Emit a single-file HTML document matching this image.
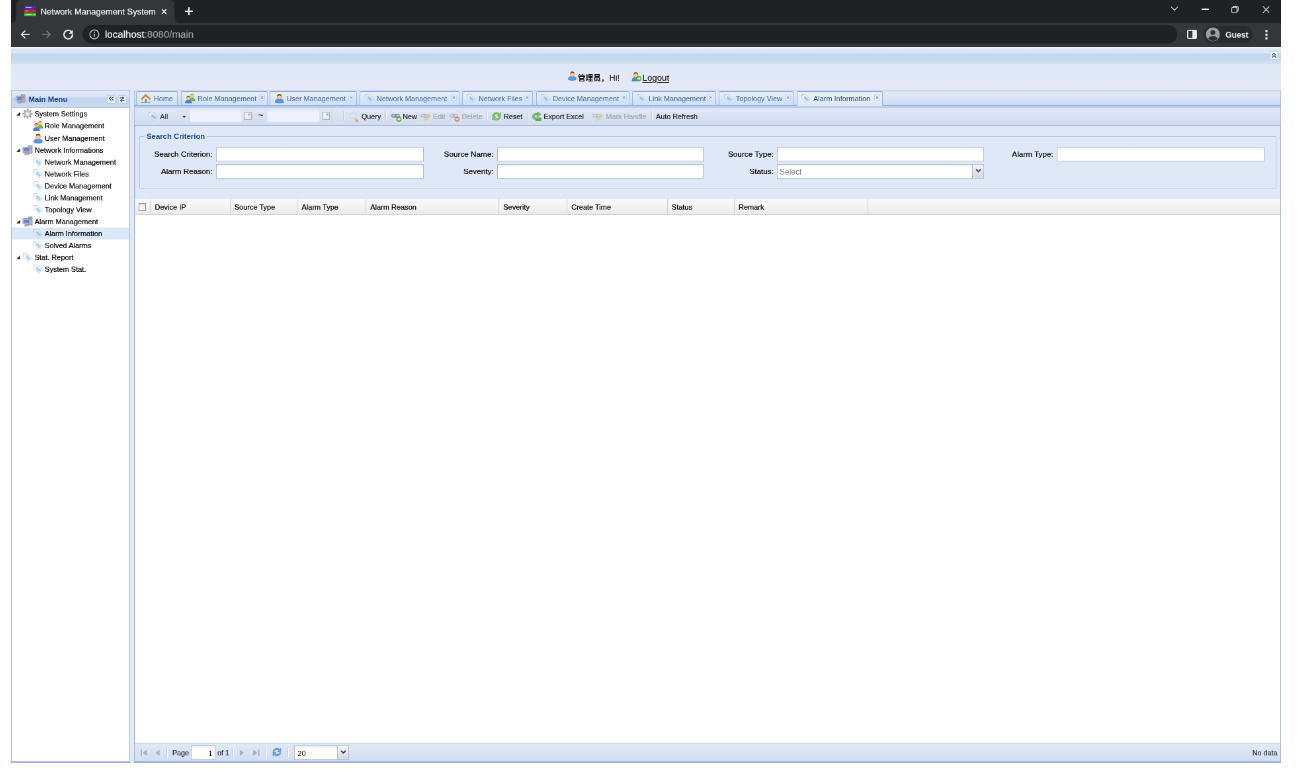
<!DOCTYPE html>
<html lang="en"><head><meta charset="utf-8"><title>Network Management System</title>
<style>
html,body{margin:0;padding:0;background:#fff;}
body{width:1299px;height:770px;overflow:hidden;position:relative;font-family:"Liberation Sans", "Noto Sans CJK SC", sans-serif;}
#root{position:absolute;left:11px;top:0;width:1920px;height:1153px;transform:scale(0.66146);transform-origin:0 0;overflow:hidden;background:#dfe8f6;font-size:11px;color:#000;will-change:transform;}
.a{position:absolute;white-space:nowrap;}
.t{position:absolute;white-space:nowrap;line-height:16px;height:16px;}
svg{position:absolute;overflow:visible;}
.hd{background:linear-gradient(#f3f7fc 0px,#dde8f6 2px,#d9e5f5 8px,#c3d6ef 10px,#c9daf0 18px,#d3e1f4 25px);border:1px solid #99bbe8;box-sizing:border-box;}
.tab{position:absolute;top:1.500px;height:21.500px;box-sizing:border-box;border:1px solid #9bb6e0;border-top-color:#86a8da;border-bottom:none;border-radius:3px 3px 0 0;background:linear-gradient(#e6f0fc,#d6e5f8 60%,#cfe0f6);}
.tab .t{top:2px;color:#48618e;font-size:10.9px;}
.tab.act{background:linear-gradient(#e9f0fb,#dde8f8);height:22px;border-color:#9db5dc;border-top-color:#7fa3d8;}
.tab.act .t{color:#34486e;}
.x{position:absolute;top:4px;right:3px;width:9px;height:9px;}
.inp{position:absolute;height:22px;box-sizing:border-box;border:1px solid #b5b8c8;background:#fff linear-gradient(#e9eef4 0,#fff 4px);}
.lbl{position:absolute;font-size:11.75px;line-height:16px;text-align:right;width:100px;white-space:nowrap;}
.sep{position:absolute;width:1px;height:14px;background:#b4c6e6;border-right:1px solid #fff;}
.tb{position:absolute;color:#23262f;font-size:10.8px;line-height:16px;white-space:nowrap;}
.tb.dis{color:#a1a7b2;}
.gh{position:absolute;top:0;height:23px;border-right:1px solid #d0d0d0;border-left:1px solid #eee;box-sizing:border-box;}
.gh span{position:absolute;left:5px;top:5.300px;font-size:11px;line-height:15px;white-space:nowrap;}
.row{position:absolute;left:0;width:178px;height:18px;}
.row .t{top:1px;font-size:11px;}
.row .t,.tb,.lbl,.gh span{-webkit-text-stroke:.22px currentColor;}
</style></head>
<body>

<svg width="0" height="0" style="position:absolute">
<defs>
<symbol id="tag" viewBox="0 0 16 16"><g opacity="0.58"><path d="M1.500 1.500H7L14.500 9 9 14.500 1.500 7Z" fill="#fff" stroke="#9aa4b2" stroke-width="1"/><path d="M5.500 4.600 7.300 4.500 12.600 9.500 9.500 12.600 4.500 7.500Z" fill="#6db6f0"/><circle cx="3.600" cy="3.600" r=".9" fill="#fff" stroke="#9aa4b2" stroke-width=".5"/></g></symbol>
<symbol id="user" viewBox="0 0 16 16"><path d="M1.500 14C1.500 10.300 4 9 8 9s6.500 1.300 6.500 5C12.500 15.800 3.500 15.800 1.500 14Z" fill="#5a98e6" stroke="#3468bd" stroke-width=".8"/><circle cx="8" cy="6" r="3.4" fill="#f5cfa0" stroke="#c98e55" stroke-width=".6"/><path d="M4.4 5.6C4.2 2.2 6 1 8 1s3.8 1.2 3.6 4.6C10.5 4 9.5 3.6 8 3.6S5.5 4 4.4 5.6Z" fill="#8b4a1c"/></symbol>
<symbol id="group" viewBox="0 0 16 16"><path d="M7 12C7 8.5 9 7.5 11.3 7.5S15.6 8.5 15.6 12Z" fill="#6cc04a" stroke="#3f8f2a" stroke-width=".7"/><circle cx="11.3" cy="4.3" r="2.8" fill="#f5cfa0" stroke="#c98e55" stroke-width=".6"/><path d="M8.4 4C8.3 1.4 9.7.6 11.3.6s3 .8 2.9 3.4C13.3 2.8 12.4 2.5 11.3 2.5S9.3 2.8 8.4 4Z" fill="#e29a2e"/><path d="M.6 15.6C.6 11.8 2.7 10.6 5.4 10.6s4.8 1.2 4.8 5Z" fill="#3d86e6" stroke="#245fb8" stroke-width=".7"/><circle cx="5.4" cy="7.8" r="2.8" fill="#f5cfa0" stroke="#c98e55" stroke-width=".6"/><path d="M2.5 7.5C2.4 4.8 3.8 4 5.4 4s3 .8 2.9 3.5C7.4 6.2 6.5 5.9 5.4 5.9S3.4 6.2 2.5 7.5Z" fill="#8b4a1c"/></symbol>
<symbol id="usergo" viewBox="0 0 16 16"><path d="M1 15.500C1 11 3.500 9.500 7 9.500S13 11 13 15.500Z" fill="#4d8fe0" stroke="#2c62b5" stroke-width=".8"/><circle cx="7" cy="6" r="3.400" fill="#f5cfa0" stroke="#c98e55" stroke-width=".6"/><path d="M3.400 5.600C3.200 2.200 5 1 7 1s3.800 1.200 3.600 4.600C9.500 4 8.500 3.600 7 3.600S4.500 4 3.400 5.600Z" fill="#8b4a1c"/><circle cx="11.800" cy="11.500" r="4" fill="#5fbf45" stroke="#3a8f28" stroke-width=".7"/><path d="M9.500 11.500h4M11.800 9.500l2 2-2 2" stroke="#fff" stroke-width="1.200" fill="none"/></symbol>
<symbol id="cog" viewBox="0 0 16 16"><g fill="none" stroke="#a2a2a2"><g stroke-width="2.600"><path d="M8 .4V3M8 13v2.600M.4 8H3M13 8h2.600M2.600 2.600l1.900 1.900M11.500 11.500l1.900 1.900M13.400 2.600l-1.900 1.900M4.500 11.500l-1.900 1.900"/></g></g><circle cx="8" cy="8" r="5.300" fill="#b4b4b4"/><circle cx="8" cy="8" r="3.600" fill="#dcdcdc"/><circle cx="8" cy="8" r="1.600" fill="#f4f4f4"/></symbol>
<symbol id="comp" viewBox="0 0 16 16"><rect x="9" y="1" width="6" height="12" fill="#b9bcc2" stroke="#7d8188" stroke-width=".8"/><rect x="10.3" y="3" width="3.4" height="1" fill="#7d8188"/><rect x="10.3" y="5.2" width="3.4" height="1" fill="#7d8188"/><rect x="1" y="3.5" width="10.5" height="8.2" rx="1" fill="#d5d7db" stroke="#7d8188" stroke-width=".8"/><rect x="2.3" y="4.8" width="7.9" height="5.4" fill="#6a7fd6"/><rect x="4.2" y="12" width="4" height="1.4" fill="#9a9ca2"/><rect x="2.8" y="13.4" width="7" height="1.6" rx=".6" fill="#c3c5ca" stroke="#8a8d94" stroke-width=".6"/></symbol>
<symbol id="house" viewBox="0 0 16 16"><rect x="1" y="13.5" width="14" height="1.6" fill="#5aa83c"/><path d="M3 8v6h10V8L8 3.5Z" fill="#f6ecd2" stroke="#b9975a" stroke-width=".6"/><path d="M.8 8.6 8 1.6l7.2 7-1.3 1.2L8 4.2 2.1 9.8Z" fill="#d08a3a" stroke="#9a5a1a" stroke-width=".6"/><rect x="6.6" y="9.2" width="2.8" height="4.8" fill="#8a6ab0"/></symbol>
<symbol id="zoom" viewBox="0 0 16 16"><g opacity=".5"><circle cx="6.300" cy="6.300" r="4.600" fill="#dcecfb" stroke="#b4c8dc" stroke-width="1.300"/></g><path d="M10.500 10.500 15.500 15.800 11 15.800Z" fill="#e0a838" stroke="#c08a2a" stroke-width=".4"/></symbol>
<symbol id="link" viewBox="0 0 16 16"><g fill="none" stroke="#7b7f86" stroke-width="1.5"><rect x=".8" y="5" width="6.400" height="4" rx="2"/><rect x="5.400" y="5" width="6.400" height="4" rx="2"/></g></symbol>
<symbol id="plus" viewBox="0 0 16 16"><circle cx="11.400" cy="12.200" r="3.500" fill="#6cc23e" stroke="#3f8d24" stroke-width=".7"/><path d="M11.400 10.200v4M9.400 12.200h4" stroke="#fff" stroke-width="1.400"/></symbol>
<symbol id="minus" viewBox="0 0 16 16"><circle cx="11.400" cy="12.200" r="3.500" fill="#e8642c" stroke="#b3401a" stroke-width=".7"/><path d="M9.400 12.200h4" stroke="#fff" stroke-width="1.400"/></symbol>
<symbol id="pencil" viewBox="0 0 16 16"><path d="M5 15.2 5.8 12 13 4.8 15.4 7.2 8.2 14.4Z" fill="#efc24a" stroke="#b98a22" stroke-width=".6"/><path d="M5 15.2 5.8 12 8.2 14.4Z" fill="#f3dcb0"/></symbol>
<symbol id="refg" viewBox="0 0 16 16"><path d="M2 7.2C2.6 3.8 5 2.2 8 2.2c1.9 0 3.3.7 4.3 1.8L14 2.4v5h-5l1.8-1.8C10 4.8 9.1 4.4 8 4.4c-2 0-3.3 1-3.8 2.8Z" fill="#78c656" stroke="#4a9a2c" stroke-width=".6"/><path d="M14 8.8c-.6 3.4-3 5-6 5-1.9 0-3.3-.7-4.3-1.8L2 13.6v-5h5L5.200 10.400c.8.800 1.700 1.200 2.800 1.200 2 0 3.300-1 3.800-2.800Z" fill="#78c656" stroke="#4a9a2c" stroke-width=".6"/></symbol>
<symbol id="refb" viewBox="0 0 16 16"><path d="M2 7.2C2.6 3.8 5 2.2 8 2.2c1.9 0 3.3.7 4.300 1.800L14 2.400v5h-5l1.800-1.800C10 4.800 9.100 4.400 8 4.400c-2 0-3.300 1-3.800 2.800Z" fill="#6aa5ea" stroke="#3f78c8" stroke-width=".6"/><path d="M14 8.800c-.6 3.400-3 5-6 5-1.900 0-3.300-.7-4.300-1.800L2 13.600v-5h5L5.200 10.400c.8.800 1.700 1.200 2.800 1.200 2 0 3.300-1 3.800-2.800Z" fill="#6aa5ea" stroke="#3f78c8" stroke-width=".6"/></symbol>
<symbol id="exp" viewBox="0 0 16 16"><path d="M14.500 12.500H6.500C3.500 12.500 1.500 10.700 1.500 8S3.500 3.500 6.500 3.500H9V1l5 3.800L9 8.600V6H6.500C5 6 4 6.800 4 8s1 2 2.500 2h8Z" fill="#74c45a" stroke="#3f9430" stroke-width=".7"/><rect x="6" y="13" width="9" height="1.800" fill="#4fa63a"/></symbol>
</defs></svg>

<div id="root">
<div class="a" style="left:0;top:0;width:1920px;height:71px;background:#202124;"></div>
<div class="a" style="left:0;top:34.800px;width:1920px;height:36.200px;background:#35363a;"></div>
<div class="a" style="left:8px;top:0;width:239px;height:35px;background:#35363a;border-radius:7px 7px 0 0;"></div><div class="a" style="left:0;top:26.800px;width:8px;height:8px;background:radial-gradient(circle at 0 0,rgba(53,54,58,0) 7.600px,#35363a 8.400px);"></div><div class="a" style="left:247px;top:26.800px;width:8px;height:8px;background:radial-gradient(circle at 100% 0,rgba(53,54,58,0) 7.600px,#35363a 8.400px);"></div>
<svg class="a" style="left:20px;top:8.500px" width="18" height="15.500" viewBox="0 0 18 16" preserveAspectRatio="none"><rect x="0" y="0" width="18" height="4.6" rx="1" fill="#3a2fd0"/><rect x="2" y="1.7" width="9" height="1.2" fill="#d9c8ff"/><rect x="0" y="5.6" width="18" height="4.6" rx="1" fill="#d0203a"/><rect x="2" y="7.3" width="4" height="1.2" fill="#ff9aa8"/><rect x="0" y="11.2" width="18" height="4.6" rx="1" fill="#1fc02a"/><rect x="2" y="12.9" width="9" height="1.4" fill="#d8ffd8"/><rect x="14.500" y="12.900" width="1.600" height="1.400" fill="#fff"/></svg>
<div class="t" id="tabtitle" style="left:44.7px;top:10px;color:#f1f3f4;font-size:13px;-webkit-text-stroke:.2px #f1f3f4;">Network Management System</div>
<svg class="a" style="left:227px;top:13px" width="9" height="9" viewBox="0 0 11 11"><path d="M1.500 1.500l8 8M9.500 1.500l-8 8" stroke="#f1f3f4" stroke-width="2.100"/></svg>
<svg class="a" style="left:263.300px;top:10.700px" width="12" height="12" viewBox="0 0 14 14"><path d="M7 0v14M0 7h14" stroke="#f1f3f4" stroke-width="2.500"/></svg>
<svg class="a" style="left:1753px;top:9px" width="12" height="7.500" viewBox="0 0 16 10"><path d="M1 1.500l7 7 7-7" stroke="#e8eaed" stroke-width="1.500" fill="none"/></svg>
<div class="a" style="left:1800px;top:13.300px;width:10.500px;height:1.4px;background:#fff"></div>
<svg class="a" style="left:1845px;top:9px" width="11" height="11" viewBox="0 0 15 15"><rect x=".8" y="3.200" width="10.500" height="10.500" rx="2" fill="none" stroke="#fff" stroke-width="1.400"/><path d="M3.500 3V2.800A2 2 0 0 1 5.500 .8h6.400a2 2 0 0 1 2 2v6.400a2 2 0 0 1-2 2h-.3" fill="none" stroke="#fff" stroke-width="1.400"/></svg>
<svg class="a" style="left:1892px;top:9px" width="11" height="11" viewBox="0 0 15 15"><path d="M1 1l13 13M14 1L1 14" stroke="#fff" stroke-width="1.500"/></svg>
<svg class="a" style="left:14.300px;top:45px" width="15" height="14" viewBox="0 0 17 16"><path d="M16 8H2M8.500 1.500 2 8l6.500 6.500" stroke="#e8eaed" stroke-width="2" fill="none"/></svg>
<svg class="a" style="left:46.400px;top:45px" width="15" height="14" viewBox="0 0 17 16"><path d="M1 8h14M8.500 1.500 15 8l-6.500 6.500" stroke="#76777a" stroke-width="2" fill="none"/></svg>
<svg class="a" style="left:78px;top:44px" width="17" height="16" viewBox="0 0 17 16"><path d="M13.600 4.200A6.500 6.500 0 1 0 15 8" stroke="#e8eaed" stroke-width="2.200" fill="none"/><path d="M15.500 1v6h-6z" fill="#e8eaed"/></svg>
<div class="a" style="left:108px;top:38px;width:1655px;height:27.500px;border-radius:14px;background:#202124;"></div>
<svg class="a" style="left:118px;top:44px" width="16" height="16" viewBox="0 0 16 16"><circle cx="8" cy="8" r="6.800" fill="none" stroke="#c8cacd" stroke-width="1.400"/><path d="M8 7v4.500" stroke="#c8cacd" stroke-width="1.600"/><circle cx="8" cy="4.700" r="1" fill="#c8cacd"/></svg>
<div class="t" id="url" style="left:142px;top:44px;font-size:15.1px;color:#f4f5f6;-webkit-text-stroke:.2px currentColor;">localhost<span style="color:#9aa0a6">:8080/main</span></div>
<svg class="a" style="left:1778px;top:45px" width="15" height="14" viewBox="0 0 17 16"><rect x="1" y="1" width="15" height="14" rx="1.500" fill="none" stroke="#e8eaed" stroke-width="2"/><rect x="9" y="1" width="7" height="14" fill="#e8eaed"/></svg>
<div class="a" style="left:1803px;top:39px;width:74px;height:26px;border-radius:13px;background:#292a2d;"></div>
<svg class="a" style="left:1806px;top:41px" width="22" height="22" viewBox="0 0 22 22"><circle cx="11" cy="11" r="10.500" fill="#9aa0a6"/><circle cx="11" cy="8.200" r="3.600" fill="#2d2e31"/><path d="M3.800 17.500C5.500 14.500 8 13.600 11 13.600s5.500.9 7.200 3.900A10 10 0 0 1 11 21a10 10 0 0 1-7.200-3.500Z" fill="#2d2e31"/></svg>
<div class="t" id="guest" style="left:1836px;top:45px;font-size:12.5px;font-weight:bold;letter-spacing:-.2px;color:#e8eaed;">Guest</div>
<svg class="a" style="left:1896px;top:45px" width="4" height="15" viewBox="0 0 4 15"><rect x=".3" y=".3" width="3.400" height="3.400" rx="1.200" fill="#e8eaed"/><rect x=".3" y="5.800" width="3.400" height="3.400" rx="1.200" fill="#e8eaed"/><rect x=".3" y="11.300" width="3.400" height="3.400" rx="1.200" fill="#e8eaed"/></svg>
<div class="a hd" style="left:0;top:71px;width:1920px;height:26px;border-left:none;border-right:none;border-top-color:#eef3fa;border-bottom-color:#d3e1f4"></div>
<div class="a" style="left:1903px;top:76.500px;width:13px;height:13px;background:#eaf2fc;border:1px solid #b8cfea;box-sizing:border-box;"></div>
<svg class="a" style="left:1905px;top:78.500px" width="9" height="9" viewBox="0 0 9 9"><path d="M1.500 4.500l3-3 3 3M1.500 8l3-3 3 3" stroke="#46546e" stroke-width="1.400" fill="none"/></svg>
<div class="a" style="left:0;top:97px;width:1920px;height:39.500px;background:linear-gradient(#dfe8f7,#e5e9f7);"></div>
<svg class="a" style="left:840.5px;top:107px;" width="15" height="15"><use href="#user"/></svg>
<div class="t" id="hi" style="left:857px;top:109.500px;font-size:12.7px;"><b style="font-size:11.6px">管理员</b>，Hi!</div>
<svg class="a" style="left:937.5px;top:107.5px;" width="15" height="15"><use href="#usergo"/></svg>
<div class="t" id="logout" style="left:954.5px;top:109.500px;font-size:13.3px;text-decoration:underline;text-decoration-thickness:1.300px;text-underline-offset:1.500px;">Logout</div>
<div class="a" style="left:0;top:136px;width:180px;height:1017px;background:#fff;border:1.300px solid #a3aed4;border-bottom-width:2.200px;box-sizing:border-box;"></div>
<div class="a" style="left:0;top:136.300px;width:180px;height:27px;box-sizing:border-box;border:1px solid #a9b8d8;border-bottom-color:#b4c4e2;background:linear-gradient(#eef3fb 0,#dfe9f7 1.500px,#d6e3f4 9.500px,#c1d4ed 11.500px,#c5d7ee 18px,#cbdbf1 25px);"></div>
<svg class="a" style="left:6.7px;top:142.3px;" width="15" height="15"><use href="#comp"/></svg>
<div class="t" id="mm" style="left:26.5px;top:142.300px;font-size:11.45px;font-weight:bold;color:#15428b;">Main Menu</div>
<div class="a" style="left:144.5px;top:143.500px;width:13px;height:13px;background:#eaf2fc;border:1px solid #b8cfea;box-sizing:border-box;"></div>
<svg class="a" style="left:144.5px;top:144px" width="13" height="11" viewBox="0 0 13 11"><path d="M6.500 2 3.500 5l3 3M10 2 7 5l3 3" stroke="#46546e" stroke-width="1.300" fill="none"/></svg>
<div class="a" style="left:161.5px;top:143.500px;width:13px;height:13px;background:#eaf2fc;border:1px solid #b8cfea;box-sizing:border-box;"></div>
<svg class="a" style="left:161.5px;top:144px" width="13" height="11" viewBox="0 0 13 11"><path d="M2.500 4h6M6.500 2l2 2-2 2M9.500 8h-6M5.500 6l-2 2 2 2" stroke="#46546e" stroke-width="1.300" fill="none"/></svg>
<div class="a" id="tree" style="left:1px;top:163.3px;width:178px;">
<div class="row" style="top:0.0px;">
<svg class="a" style="left:7px;top:6px" width="6" height="6" viewBox="0 0 8 8"><path d="M7.800 .2v7.600H.2Z" fill="#1e1e1e"/></svg>
<svg class="a" style="left:16px;top:1px;" width="16" height="16"><use href="#cog"/></svg>
<div class="t" style="left:34.7px;">System Settings</div>
</div>
<div class="row" style="top:18.14px;">
<svg class="a" style="left:32px;top:1px;" width="16" height="16"><use href="#group"/></svg>
<div class="t" style="left:50.1px;">Role Management</div>
</div>
<div class="row" style="top:36.28px;">
<svg class="a" style="left:32px;top:1px;" width="16" height="16"><use href="#user"/></svg>
<div class="t" style="left:50.1px;">User Management</div>
</div>
<div class="row" style="top:54.43px;">
<svg class="a" style="left:7px;top:6px" width="6" height="6" viewBox="0 0 8 8"><path d="M7.800 .2v7.600H.2Z" fill="#1e1e1e"/></svg>
<svg class="a" style="left:16px;top:1px;" width="16" height="16"><use href="#comp"/></svg>
<div class="t" style="left:34.7px;">Network Informations</div>
</div>
<div class="row" style="top:72.57px;">
<svg class="a" style="left:32px;top:1px;" width="16" height="16"><use href="#tag"/></svg>
<div class="t" style="left:50.1px;">Network Management</div>
</div>
<div class="row" style="top:90.71px;">
<svg class="a" style="left:32px;top:1px;" width="16" height="16"><use href="#tag"/></svg>
<div class="t" style="left:50.1px;">Network Files</div>
</div>
<div class="row" style="top:108.85px;">
<svg class="a" style="left:32px;top:1px;" width="16" height="16"><use href="#tag"/></svg>
<div class="t" style="left:50.1px;">Device Management</div>
</div>
<div class="row" style="top:126.99px;">
<svg class="a" style="left:32px;top:1px;" width="16" height="16"><use href="#tag"/></svg>
<div class="t" style="left:50.1px;">Link Management</div>
</div>
<div class="row" style="top:145.13px;">
<svg class="a" style="left:32px;top:1px;" width="16" height="16"><use href="#tag"/></svg>
<div class="t" style="left:50.1px;">Topology View</div>
</div>
<div class="row" style="top:162.37px;">
<svg class="a" style="left:7px;top:6px" width="6" height="6" viewBox="0 0 8 8"><path d="M7.800 .2v7.600H.2Z" fill="#1e1e1e"/></svg>
<svg class="a" style="left:16px;top:1px;" width="16" height="16"><use href="#comp"/></svg>
<div class="t" style="left:34.7px;">Alarm Management</div>
</div>
<div class="row" style="top:180.51px;background:#dce7f9;">
<svg class="a" style="left:32px;top:1px;" width="16" height="16"><use href="#tag"/></svg>
<div class="t" style="left:50.1px;">Alarm Information</div>
</div>
<div class="row" style="top:198.65px;">
<svg class="a" style="left:32px;top:1px;" width="16" height="16"><use href="#tag"/></svg>
<div class="t" style="left:50.1px;">Solved Alarms</div>
</div>
<div class="row" style="top:216.79px;">
<svg class="a" style="left:7px;top:6px" width="6" height="6" viewBox="0 0 8 8"><path d="M7.800 .2v7.600H.2Z" fill="#1e1e1e"/></svg>
<svg class="a" style="left:16px;top:1px;" width="16" height="16"><use href="#tag"/></svg>
<div class="t" style="left:34.7px;">Stat. Report</div>
</div>
<div class="row" style="top:234.93px;">
<svg class="a" style="left:32px;top:1px;" width="16" height="16"><use href="#tag"/></svg>
<div class="t" style="left:50.1px;">System Stat.</div>
</div>
</div>
<div class="a" style="left:186px;top:137px;width:1734px;height:25.500px;background:linear-gradient(#e0e9f6 0,#dbe6f5 8px,#c9daf2 21px,#c9daf2 22.500px,#e9f0fb 23.700px);border:1px solid #a9bbe0;border-top-color:#a7b5d2;border-bottom:none;box-sizing:border-box;"></div>
<div class="a" style="left:186px;top:159.300px;width:1734px;height:1.300px;background:#8db2e3;"></div>
<div class="a" id="tabs" style="left:0;top:136px;width:1920px;height:26px;">
<div class="tab" style="left:189.3px;width:63.2px;">
<svg class="a" style="left:5.5px;top:2px;" width="15.5" height="15.5"><use href="#house"/></svg>
<div class="t" style="left:25.5px;">Home</div>
</div>
<div class="tab" style="left:256.7px;width:131.8px;">
<svg class="a" style="left:5.5px;top:2px;" width="15.5" height="15.5"><use href="#group"/></svg>
<div class="t" style="left:24.5px;">Role Management</div>
<svg class="x" viewBox="0 0 11 11"><rect x=".5" y=".5" width="10" height="10" rx="2" fill="#e8f1fc" stroke="#a9c0de" stroke-width=".8"/><path d="M3.200 3.200l4.600 4.600M7.800 3.200 3.200 7.800" stroke="#7f9ac0" stroke-width="1.300"/></svg>
</div>
<div class="tab" style="left:391px;width:131.8px;">
<svg class="a" style="left:5.5px;top:2px;" width="15.5" height="15.5"><use href="#user"/></svg>
<div class="t" style="left:24.5px;">User Management</div>
<svg class="x" viewBox="0 0 11 11"><rect x=".5" y=".5" width="10" height="10" rx="2" fill="#e8f1fc" stroke="#a9c0de" stroke-width=".8"/><path d="M3.200 3.200l4.600 4.600M7.800 3.200 3.200 7.800" stroke="#7f9ac0" stroke-width="1.300"/></svg>
</div>
<div class="tab" style="left:527.3px;width:150.3px;">
<svg class="a" style="left:5.5px;top:2px;" width="15.5" height="15.5"><use href="#tag"/></svg>
<div class="t" style="left:24.5px;">Network Management</div>
<svg class="x" viewBox="0 0 11 11"><rect x=".5" y=".5" width="10" height="10" rx="2" fill="#e8f1fc" stroke="#a9c0de" stroke-width=".8"/><path d="M3.200 3.200l4.600 4.600M7.800 3.200 3.200 7.800" stroke="#7f9ac0" stroke-width="1.300"/></svg>
</div>
<div class="tab" style="left:681.5px;width:107.5px;">
<svg class="a" style="left:5.5px;top:2px;" width="15.5" height="15.5"><use href="#tag"/></svg>
<div class="t" style="left:24.5px;">Network Files</div>
<svg class="x" viewBox="0 0 11 11"><rect x=".5" y=".5" width="10" height="10" rx="2" fill="#e8f1fc" stroke="#a9c0de" stroke-width=".8"/><path d="M3.200 3.200l4.600 4.600M7.800 3.200 3.200 7.800" stroke="#7f9ac0" stroke-width="1.300"/></svg>
</div>
<div class="tab" style="left:793.7px;width:141.0px;">
<svg class="a" style="left:5.5px;top:2px;" width="15.5" height="15.5"><use href="#tag"/></svg>
<div class="t" style="left:24.5px;">Device Management</div>
<svg class="x" viewBox="0 0 11 11"><rect x=".5" y=".5" width="10" height="10" rx="2" fill="#e8f1fc" stroke="#a9c0de" stroke-width=".8"/><path d="M3.200 3.200l4.600 4.600M7.800 3.200 3.200 7.800" stroke="#7f9ac0" stroke-width="1.300"/></svg>
</div>
<div class="tab" style="left:938.5px;width:127.3px;">
<svg class="a" style="left:5.5px;top:2px;" width="15.5" height="15.5"><use href="#tag"/></svg>
<div class="t" style="left:24.5px;">Link Management</div>
<svg class="x" viewBox="0 0 11 11"><rect x=".5" y=".5" width="10" height="10" rx="2" fill="#e8f1fc" stroke="#a9c0de" stroke-width=".8"/><path d="M3.200 3.200l4.600 4.600M7.800 3.200 3.200 7.800" stroke="#7f9ac0" stroke-width="1.300"/></svg>
</div>
<div class="tab" style="left:1070.3px;width:112.8px;">
<svg class="a" style="left:5.5px;top:2px;" width="15.5" height="15.5"><use href="#tag"/></svg>
<div class="t" style="left:24.5px;">Topology View</div>
<svg class="x" viewBox="0 0 11 11"><rect x=".5" y=".5" width="10" height="10" rx="2" fill="#e8f1fc" stroke="#a9c0de" stroke-width=".8"/><path d="M3.200 3.200l4.600 4.600M7.800 3.200 3.200 7.800" stroke="#7f9ac0" stroke-width="1.300"/></svg>
</div>
<div class="tab act" style="left:1187.6px;width:130.6px;">
<svg class="a" style="left:5.5px;top:2px;" width="15.5" height="15.5"><use href="#tag"/></svg>
<div class="t" style="left:24.5px;">Alarm Information</div>
<svg class="x" viewBox="0 0 11 11"><rect x=".5" y=".5" width="10" height="10" rx="2" fill="#e8f1fc" stroke="#a9c0de" stroke-width=".8"/><path d="M3.200 3.200l4.600 4.600M7.800 3.200 3.200 7.800" stroke="#7f9ac0" stroke-width="1.300"/></svg>
</div>
</div>
<div class="a" style="left:186px;top:162.300px;width:1734px;height:1px;background:#b9cbe8;z-index:2;"></div>
<div class="a" id="tbar" style="left:186px;top:162.500px;width:1734px;height:27px;background:linear-gradient(#e0e6f4,#d2ddf0);border:1px solid #a9bbe0;border-top:none;border-bottom:1.300px solid #9ea8cc;box-sizing:border-box;"></div>
<svg class="a" style="left:206.8px;top:168px;" width="16" height="16"><use href="#tag"/></svg>
<div class="tb" id="tb_all" style="left:225.3px;top:168px;-webkit-text-stroke:0;">All</div>
<svg class="a" style="left:258.8px;top:174.500px" width="5.500" height="3.500" viewBox="0 0 7 4"><path d="M0 0h7L3.500 4Z" fill="#222"/></svg>
<div class="a" style="left:269.6px;top:165.500px;width:79.7px;height:19.500px;box-sizing:border-box;border:1px solid rgba(181,184,200,.25);background:linear-gradient(rgba(240,244,250,.6),rgba(255,255,255,.6) 5px);"></div>
<div class="a" style="left:349.3px;top:165.500px;width:17px;height:19.500px;box-sizing:border-box;border:1px solid rgba(181,184,200,.3);border-left:none;background:linear-gradient(rgba(244,246,249,.35),rgba(217,221,228,.35));"></div>
<svg class="a" style="left:351.8px;top:169px;opacity:.75" width="12" height="12" viewBox="0 0 12 12"><rect x=".6" y=".6" width="10.800" height="10.800" fill="#f4f6f9" stroke="#9aa0aa" stroke-width="1.200"/><rect x="6.500" y="2.500" width="3" height="3" fill="#8e98aa"/></svg>
<div class="tb" style="left:373.9px;top:165.5px;font-size:13px;">~</div>
<div class="a" style="left:386.7px;top:165.500px;width:80.8px;height:19.500px;box-sizing:border-box;border:1px solid rgba(181,184,200,.25);background:linear-gradient(rgba(240,244,250,.6),rgba(255,255,255,.6) 5px);"></div>
<div class="a" style="left:467.5px;top:165.500px;width:17px;height:19.500px;box-sizing:border-box;border:1px solid rgba(181,184,200,.3);border-left:none;background:linear-gradient(rgba(244,246,249,.35),rgba(217,221,228,.35));"></div>
<svg class="a" style="left:470.0px;top:169px;opacity:.75" width="12" height="12" viewBox="0 0 12 12"><rect x=".6" y=".6" width="10.800" height="10.800" fill="#f4f6f9" stroke="#9aa0aa" stroke-width="1.200"/><rect x="6.500" y="2.500" width="3" height="3" fill="#8e98aa"/></svg>
<div class="sep" style="left:501.9px;top:168px;"></div>
<svg class="a" style="left:510.7px;top:168.5px;" width="15" height="15"><use href="#zoom"/></svg>
<div class="tb" id="tb_query" style="left:529.9px;top:168px;">Query</div>
<div class="sep" style="left:566.3px;top:168px;"></div>
<svg class="a" style="left:574.9px;top:168px;" width="16" height="16"><use href="#link"/></svg>
<svg class="a" style="left:574.9px;top:168px;" width="16" height="16"><use href="#plus"/></svg>
<div class="tb" id="tb_new" style="left:592.3px;top:168px;">New</div>
<svg class="a" style="left:619.1px;top:168px;opacity:.45" width="16" height="16"><use href="#link"/></svg>
<svg class="a" style="left:619.1px;top:168px;opacity:.5" width="16" height="16"><use href="#pencil"/></svg>
<div class="tb dis" id="tb_edit" style="left:638.0px;top:168px;">Edit</div>
<svg class="a" style="left:662.9px;top:168px;opacity:.45" width="16" height="16"><use href="#link"/></svg>
<svg class="a" style="left:662.9px;top:168px;opacity:.6" width="16" height="16"><use href="#minus"/></svg>
<div class="tb dis" id="tb_del" style="left:681.5px;top:168px;">Delete</div>
<div class="sep" style="left:718.6px;top:168px;"></div>
<svg class="a" style="left:726.0px;top:168px;" width="16" height="16"><use href="#refg"/></svg>
<div class="tb" id="tb_reset" style="left:745.0px;top:168px;">Reset</div>
<div class="sep" style="left:780.1px;top:168px;"></div>
<svg class="a" style="left:786.9px;top:168px;" width="16" height="16"><use href="#exp"/></svg>
<div class="tb" id="tb_exp" style="left:805.2px;top:168px;">Export Excel</div>
<svg class="a" style="left:879.1px;top:168px;opacity:.35" width="16" height="16"><use href="#link"/></svg>
<svg class="a" style="left:879.1px;top:168px;opacity:.45" width="16" height="16"><use href="#pencil"/></svg>
<div class="tb dis" id="tb_mark" style="left:899.4px;top:168px;">Mark Handle</div>
<div class="sep" style="left:967.6px;top:168px;"></div>
<div class="tb" id="tb_auto" style="left:975.1px;top:168px;">Auto Refresh</div>
<div class="a" style="left:186px;top:189.500px;width:1734px;height:963.500px;border:1.300px solid #a3aed4;border-top:none;box-sizing:border-box;background:#dfe8f6;"></div>
<div class="a" style="left:187.300px;top:189.500px;width:1.200px;height:111px;background:#b9cbe9;"></div>
<div class="a" style="left:194px;top:206px;width:1718.500px;height:78.500px;border:1px solid #b9c1d3;box-sizing:border-box;border-radius:1px;box-shadow:0 1px 0 rgba(255,255,255,.35);"></div>
<div class="t" id="legend" style="left:202px;top:198px;padding:0 3px;background:#dfe8f6;font-size:11.35px;font-weight:bold;color:#15428b;">Search Criterion</div>
<div class="lbl" style="left:204.6px;top:224.5px;">Search Criterion:</div>
<div class="inp" style="left:309.6px;top:222.0px;width:314.3px;"></div>
<div class="lbl" style="left:204.6px;top:250.8px;">Alarm Reason:</div>
<div class="inp" style="left:309.6px;top:248.3px;width:314.3px;"></div>
<div class="lbl" style="left:629.7px;top:224.5px;">Source Name:</div>
<div class="inp" style="left:734.7px;top:222.0px;width:312.7px;"></div>
<div class="lbl" style="left:629.7px;top:250.8px;">Severity:</div>
<div class="inp" style="left:734.7px;top:248.3px;width:312.7px;"></div>
<div class="lbl" style="left:1053px;top:224.5px;">Source Type:</div>
<div class="inp" style="left:1158px;top:222.0px;width:312.7px;"></div>
<div class="lbl" style="left:1053px;top:250.8px;">Status:</div>
<div class="inp" style="left:1158px;top:248.3px;width:295.7px;"><span class="t" style="left:3px;top:3px;font-size:12px;color:#808080;">Select</span></div>
<div class="a" style="left:1453.7px;top:248.3px;width:17px;height:22px;box-sizing:border-box;border:1px solid #b5b8c8;border-left:none;background:linear-gradient(#f4f6f9,#d3d8e0);"></div>
<svg class="a" style="left:1457.7px;top:255.3px" width="9" height="6" viewBox="0 0 9 6"><path d="M1 1l3.500 3.500L8 1" stroke="#2a3a7a" stroke-width="1.800" fill="none"/></svg>
<div class="lbl" style="left:1475.8px;top:224.5px;">Alarm Type:</div>
<div class="inp" style="left:1580.8px;top:222.0px;width:314.2px;"></div>
<div class="a" style="left:188px;top:300.5px;width:1730.5px;height:824.5px;background:#fff;"></div>
<div class="a" id="ghead" style="left:188px;top:300.5px;width:1730.5px;height:24px;background:linear-gradient(#fafafa,#f3f3f3 50%,#e9e9e9);border-bottom:1px solid #d0d0d0;box-sizing:border-box;">
<div class="gh" style="left:0;width:23px;border-left:none;"><div class="a" style="left:4.500px;top:6.500px;width:11.500px;height:11.500px;box-sizing:border-box;border:1px solid #8e8f8f;background:linear-gradient(#e6e6e6,#fff);"></div></div>
<div class="gh" style="left:23px;width:120.7px;"><span style="left:5.500px">Device IP</span></div>
<div class="gh" style="left:143.7px;width:101.8px;"><span>Source Type</span></div>
<div class="gh" style="left:245.5px;width:103.7px;"><span>Alarm Type</span></div>
<div class="gh" style="left:349.2px;width:201.0px;"><span>Alarm Reason</span></div>
<div class="gh" style="left:550.2px;width:103.0px;"><span>Severity</span></div>
<div class="gh" style="left:653.2px;width:151.6px;"><span>Create Time</span></div>
<div class="gh" style="left:804.8px;width:101.2px;"><span>Status</span></div>
<div class="gh" style="left:906px;width:202px;"><span>Remark</span></div>
</div>
<div class="a" style="left:188px;top:1124px;width:1730.5px;height:28px;background:linear-gradient(#dfe9f6,#d0def0);border-top:1px solid #99bbe8;box-sizing:border-box;"></div>
<div class="a" style="left:186px;top:1150.800px;width:1734px;height:2.200px;background:#a3aed4;"></div>
<svg class="a" style="left:195.0px;top:1132px" width="11.500" height="12" viewBox="0 0 12 12"><path d="M1 1h2v10H1ZM11 1v10L4 6Z" fill="#a8b0bd"/></svg>
<svg class="a" style="left:216.2px;top:1132px" width="11.500" height="12" viewBox="0 0 12 12"><path d="M9 1v10L2.500 6Z" fill="#a8b0bd"/></svg>
<div class="sep" style="left:235.4px;top:1131px;"></div>
<div class="tb" id="pg_page" style="left:243.9px;top:1130px;">Page</div>
<div class="inp" style="left:272.1px;top:1127px;width:37.4px;"><span class="t" style="right:4px;top:3px;font-size:11px;">1</span></div>
<div class="tb" id="pg_of" style="left:311.9px;top:1130px;">of 1</div>
<div class="sep" style="left:335.2px;top:1131px;"></div>
<svg class="a" style="left:343.2px;top:1132px" width="11.500" height="12" viewBox="0 0 12 12"><path d="M3 1v10l6.500-5Z" fill="#a8b0bd"/></svg>
<svg class="a" style="left:365.0px;top:1132px" width="11.500" height="12" viewBox="0 0 12 12"><path d="M9 1h2v10H9ZM1 1v10l7-5Z" fill="#a8b0bd"/></svg>
<div class="sep" style="left:385.1px;top:1131px;"></div>
<svg class="a" style="left:393.7px;top:1129px;" width="16" height="16"><use href="#refb"/></svg>
<div class="sep" style="left:417.7px;top:1131px;"></div>
<div class="inp" style="left:428.3px;top:1127px;width:66.1px;"><span class="t" style="left:4px;top:3px;font-size:11px;">20</span></div>
<div class="a" style="left:494.4px;top:1127px;width:17px;height:22px;box-sizing:border-box;border:1px solid #b5b8c8;border-left:none;background:linear-gradient(#f4f6f9,#d3d8e0);"></div>
<svg class="a" style="left:498.4px;top:1134px" width="9" height="6" viewBox="0 0 9 6"><path d="M1 1l3.500 3.500L8 1" stroke="#333" stroke-width="1.800" fill="none"/></svg>
<div class="tb" id="nodata" style="right:5.400000000000091px;top:1130px;">No data</div>
</div>
</body></html>
